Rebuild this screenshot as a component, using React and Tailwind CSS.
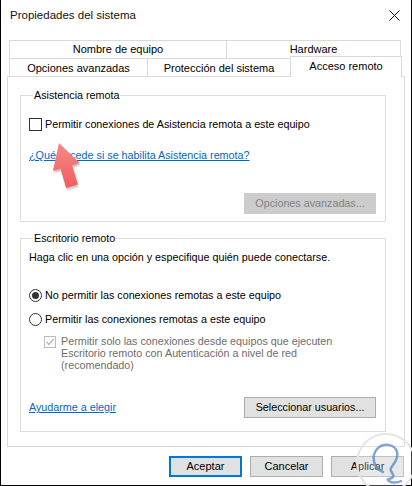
import React from "react";

const Tab = ({ children, className = "" }) => (
  <div
    className={`flex items-center justify-center border-[#d9d9d9] bg-white leading-none ${className}`}
  >
    {children}
  </div>
);

const Button = ({ children, className = "", disabled = false }) => (
  <div
    className={`flex items-center justify-center h-[21px] leading-none ${
      disabled
        ? "bg-[#cccccc] text-[#838383] border border-[#cccccc]"
        : "bg-[#e1e1e1] border border-[#adadad]"
    } ${className}`}
  >
    {children}
  </div>
);

const Radio = ({ checked }) => (
  <span className="w-[13px] h-[13px] rounded-full border border-[#333333] bg-white flex items-center justify-center shrink-0">
    {checked && <span className="w-[7px] h-[7px] rounded-full bg-[#333333]" />}
  </span>
);

const Arrow = () => (
  <svg
    className="absolute left-[40px] top-[138px] drop-shadow-[1px_2px_1px_rgba(0,0,0,0.25)]"
    width="45"
    height="55"
    viewBox="0 0 45 55"
  >
    <defs>
      <linearGradient id="arr" x1="0" y1="0" x2="0" y2="1">
        <stop offset="0" stopColor="#f58a8a" />
        <stop offset="1" stopColor="#f25c5c" />
      </linearGradient>
    </defs>
    <polygon
      points="18,5 38.7,24.9 31.1,27.3 36.8,46.5 25.2,49.9 19.5,30.7 11.9,33.1"
      fill="url(#arr)"
    />
  </svg>
);

const Watermark = () => (
  <svg
    className="absolute left-[352px] top-[432px] pointer-events-none"
    width="60"
    height="54"
    viewBox="0 0 60 54"
  >
    <circle cx="33" cy="31" r="29" fill="rgba(255,255,255,0.25)" stroke="#e4e4e4" strokeWidth="2" />
    <path
      d="M30 40 C20 36 18 24 24 17 C30 10 42 12 44 20 C46 28 40 32 38 36 C36 40 42 42 40 45 C38 48 32 46 36 49 C40 52 46 50 48 49"
      fill="none"
      stroke="rgba(70,130,200,0.7)"
      strokeWidth="2.5"
      strokeLinecap="round"
    />
  </svg>
);

export default function App() {
  return (
    <div className="relative w-[412px] h-[486px] bg-white border-x border-b border-black flex flex-col text-[11px] text-black font-[family-name:'Liberation_Sans',Arial,sans-serif]">
      {/* title bar */}
      <div className="h-[31px] flex items-center justify-between pl-[9px] pr-[10px] shrink-0">
        <span className="text-[11.5px] text-[#111]">Propiedades del sistema</span>
        <svg width="11" height="11" viewBox="0 0 11 11" className="mr-[1px]">
          <path d="M0.5 0.5 L10.5 10.5 M10.5 0.5 L0.5 10.5" stroke="#111" strokeWidth="1" />
        </svg>
      </div>

      {/* tabs */}
      <div className="mt-[9px] flex ml-[8px] h-[18px] shrink-0">
        <Tab className="w-[217px] border-l border-t">Nombre de equipo</Tab>
        <Tab className="w-[175px] border-l border-t border-r">Hardware</Tab>
      </div>
      <div className="-mt-[2px] flex items-start ml-[8px] h-[20px] shrink-0">
        <Tab className="mt-[2px] w-[138px] h-[18px] border-l border-t pt-[1px]">Opciones avanzadas</Tab>
        <Tab className="mt-[2px] w-[144px] h-[18px] border-l border-t border-r pt-[1px]">
          Protección del sistema
        </Tab>
        <Tab className="relative z-10 w-[112px] h-[21px] border-l border-t border-r -ml-px pb-[1px]">
          Acceso remoto
        </Tab>
      </div>

      {/* panel */}
      <div className="ml-[6px] w-[398px] h-[371px] border border-[#d9d9d9] shrink-0 flex flex-col text-[10.75px]">
        <fieldset className="ml-[12px] mt-[11px] w-[366px] border border-[#dcdcdc] pl-[8px] pr-[9px] pb-[7px] flex flex-col">
          <legend className="ml-[4px] px-[1px] leading-[15px]">Asistencia remota</legend>
          <div className="mt-[15px] flex items-center h-[13px]">
            <span className="w-[13px] h-[13px] border border-[#333333] bg-white shrink-0" />
            <span className="ml-[3px] leading-none">Permitir conexiones de Asistencia remota a este equipo</span>
          </div>
          <div className="mt-[17px] leading-[15px] text-[#0066cc] underline">
            ¿Qué sucede si se habilita Asistencia remota?
          </div>
          <div className="mt-[30px] flex justify-end">
            <Button disabled className="w-[132px]">
              Opciones avanzadas...
            </Button>
          </div>
        </fieldset>

        <fieldset className="ml-[12px] mt-[9px] w-[366px] border border-[#dcdcdc] pl-[8px] pr-[9px] pb-[13px] flex flex-col">
          <legend className="ml-[4px] px-[1px] leading-[15px]">Escritorio remoto</legend>
          <div className="mt-[4px] leading-[15px]">
            Haga clic en una opción y especifique quién puede conectarse.
          </div>
          <div className="mt-[24px] flex items-center h-[13px]">
            <Radio checked />
            <span className="ml-[3px] leading-none">No permitir las conexiones remotas a este equipo</span>
          </div>
          <div className="mt-[11px] flex items-center h-[13px]">
            <Radio />
            <span className="ml-[3px] leading-none">Permitir las conexiones remotas a este equipo</span>
          </div>
          <div className="mt-[10px] ml-[15px] flex items-start">
            <span className="w-[12px] h-[12px] border border-[#bcbcbc] bg-white shrink-0 flex items-center justify-center">
              <svg width="10" height="10" viewBox="0 0 10 10">
                <path d="M1.5 5 L4 7.5 L8.8 1.8" fill="none" stroke="#b5b5b5" strokeWidth="1.3" />
              </svg>
            </span>
            <span className="ml-[5px] leading-[12px] text-[#6d6d6d] -mt-[1px]">
              Permitir solo las conexiones desde equipos que ejecuten
              <br />
              Escritorio remoto con Autenticación a nivel de red
              <br />
              (recomendado)
            </span>
          </div>
          <div className="mt-[26px] flex items-center justify-between">
            <span className="text-[#0066cc] underline leading-none">Ayudarme a elegir</span>
            <Button className="w-[132px]">Seleccionar usuarios...</Button>
          </div>
        </fieldset>
      </div>

      {/* dialog buttons */}
      <div className="mt-[9px] flex justify-end gap-[8px] mr-[7px]">
        <Button className="w-[73px] !border-2 !border-[#0078d7]">Aceptar</Button>
        <Button className="w-[73px]">Cancelar</Button>
        <Button className="w-[73px]">Aplicar</Button>
      </div>

      <Arrow />
      <Watermark />
    </div>
  );
}
